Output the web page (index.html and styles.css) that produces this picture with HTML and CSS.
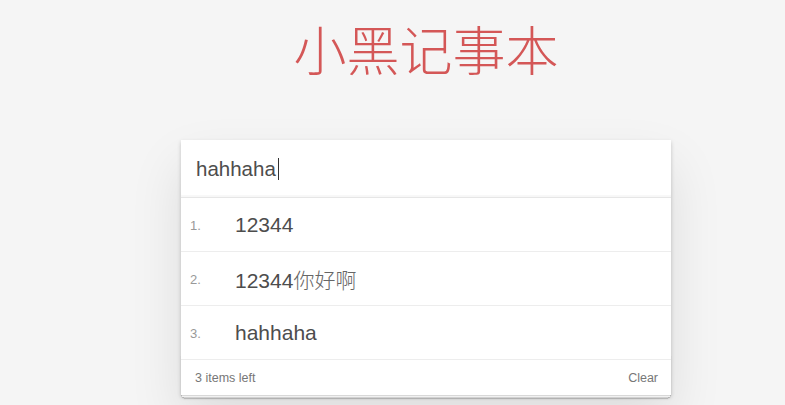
FILE: index.html
```html
<!DOCTYPE html>
<html lang="zh">
<head>
<meta charset="utf-8">
<title>小黑记事本</title>
<link rel="stylesheet" href="styles.css">
</head>
<body>
<section class="app">
  <h1 class="title">小黑记事本</h1>
  <div class="card">
    <div class="new-todo"><span class="typed">hahhaha</span><span class="caret"></span></div>
    <ul class="list">
      <li class="item"><span class="index">1.</span><span class="label">12344</span></li>
      <li class="item"><span class="index">2.</span><span class="label">12344<span class="cjk">你好啊</span></span></li>
      <li class="item"><span class="index">3.</span><span class="label">hahhaha</span></li>
    </ul>
    <footer class="footer">
      <span class="count">3 items left</span>
      <span class="clear">Clear</span>
    </footer>
  </div>
</section>
</body>
</html>
```
FILE: styles.css
```css
html, body {
  margin: 0;
  padding: 0;
}
body {
  background: #f5f5f5;
  font-family: "Liberation Sans", Arial, "Noto Sans CJK SC", sans-serif;
  color: #4d4d4d;
  height: 405px;
  overflow: hidden;
}
.app {
  width: 490px;
  margin-left: 181px;
  padding-top: 14px;
}
.title {
  margin: 0;
  height: 126px;
  text-align: center;
  font-family: "Noto Sans CJK SC", sans-serif;
  font-weight: 300;
  font-size: 53px;
  line-height: 68px;
  color: #d45757;
}
.card {
  position: relative;
  z-index: 1;
  background: #fff;
  box-shadow: 0 2px 4px rgba(0,0,0,0.2), 0 25px 50px rgba(0,0,0,0.1);
}
.new-todo {
  height: 57px;
  display: flex;
  align-items: center;
  padding-left: 15px;
  border-bottom: 1px solid #e6e6e6;
  box-shadow: inset 0 -2px 1px rgba(0,0,0,0.03);
  font-size: 20.5px;
  color: #4d4d4d;
}
.caret {
  display: inline-block;
  width: 1px;
  height: 22px;
  background: #333;
  margin-left: 2px;
}
.list {
  list-style: none;
  margin: 0;
  padding: 0;
}
.item {
  height: 53px;
  display: flex;
  align-items: center;
  border-bottom: 1px solid #ededed;
}
.index {
  width: 54px;
  padding-left: 9px;
  padding-top: 2px;
  box-sizing: border-box;
  font-size: 13px;
  color: #999;
}
.label {
  font-size: 21px;
  color: #4d4d4d;
}
.cjk {
  font-family: "Noto Sans CJK SC", sans-serif;
  font-weight: 300;
  color: #666;
}
.footer {
  position: relative;
  height: 35px;
  display: flex;
  align-items: center;
  justify-content: space-between;
  padding: 0 13px 0 14px;
  font-size: 12.5px;
  color: #777;
}
.footer::before {
  content: "";
  position: absolute;
  left: 0;
  right: 0;
  bottom: 0;
  height: 40px;
  z-index: -1;
  box-shadow: 0 1px 1px rgba(0,0,0,0.12),
              0 3px 0 -1px #f6f6f6,
              0 4px 1px -1px rgba(0,0,0,0.15),
              0 6px 0 -3px #f6f6f6,
              0 7px 1px -3px rgba(0,0,0,0.15);
}
.clear {
  color: #777;
}
```
